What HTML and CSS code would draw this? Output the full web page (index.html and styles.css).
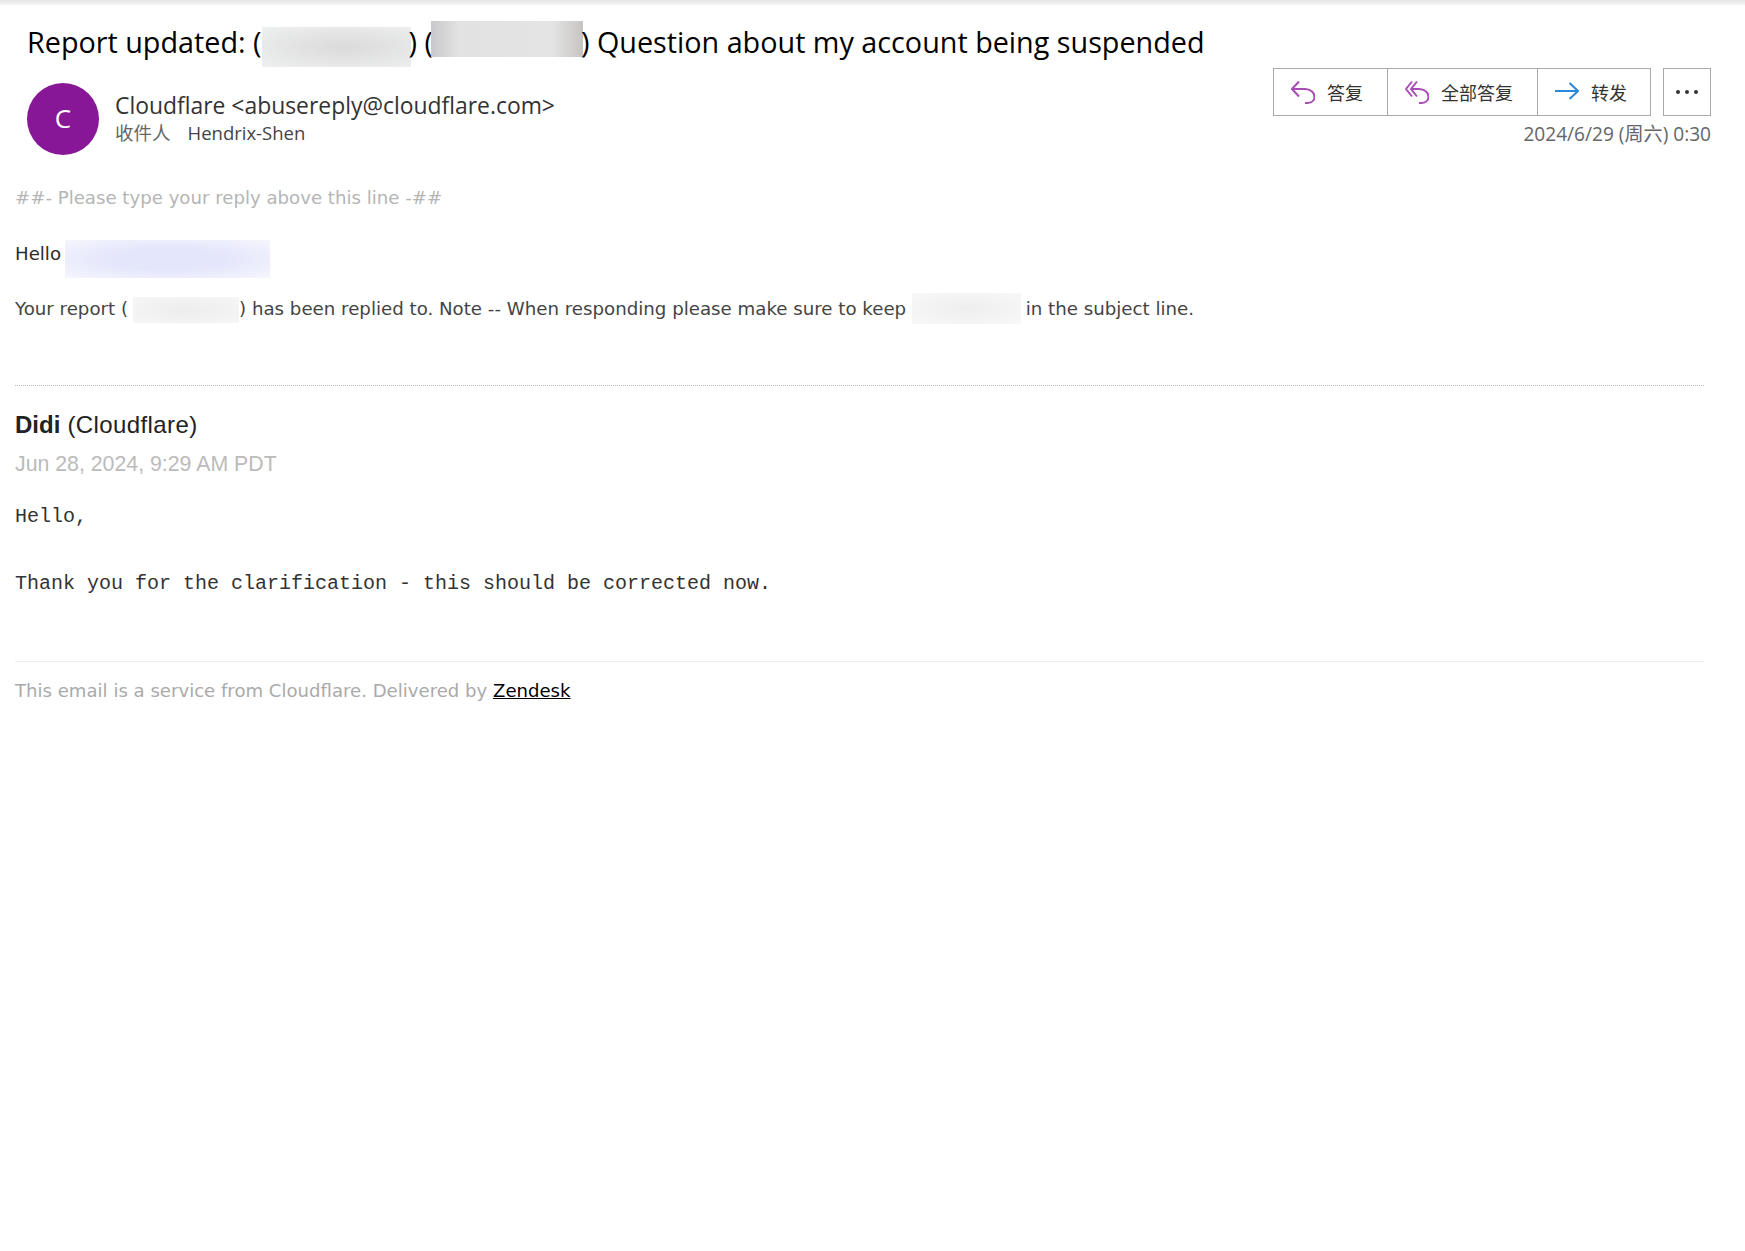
FILE: index.html
```html
<!DOCTYPE html>
<html lang="en">
<head>
<meta charset="utf-8">
<title>Report updated</title>
<link rel="stylesheet" href="styles.css">
</head>
<body>
<div class="topbar"></div>
<header class="head">
  <h1 class="subject">Report updated: (<span class="blur blur-s1"></span>) (<span class="blur blur-s2"></span>) Question about my account being suspended</h1>
  <div class="meta">
    <div class="avatar">C</div>
    <div class="who">
      <div class="from">Cloudflare &lt;abusereply@cloudflare.com&gt;</div>
      <div class="to"><span class="to-label">收件人</span><span>Hendrix-Shen</span></div>
    </div>
    <div class="actions">
      <div class="btn-row">
        <div class="btn-group">
          <button class="btn btn-reply"><svg class="ico" viewBox="0 0 24 24"><path d="M8 1.500 1 9l7 7.500M1 9h13c5.500 0 9.500 3.500 9.500 8 0 3.500-3 6-7.500 6h-2" /></svg><span>答复</span></button>
          <button class="btn btn-all"><svg class="ico" viewBox="0 0 24 24"><path d="M7 1.500 1 9l6 7.500M12 1.500 6 9l6 7.500M6 9h8c5.500 0 9.500 3.500 9.500 8 0 3.500-3 6-7.500 6h-2" /></svg><span>全部答复</span></button>
          <button class="btn btn-fwd"><svg class="ico ico-fwd" viewBox="0 0 24 24"><path d="M0 11h23M14.500 3 23 11l-8.500 8" /></svg><span>转发</span></button>
        </div>
        <button class="btn-more"><i></i><i></i><i></i></button>
      </div>
      <div class="date">2024/6/29 (周六) 0:30</div>
    </div>
  </div>
</header>
<main class="body">
  <p class="delim">##- Please type your reply above this line -##</p>
  <p class="hello">Hello <span class="blur blur-name"></span></p>
  <p class="report">Your report (<span class="blur blur-id"></span>) has been replied to. Note -- When responding please make sure to keep <span class="blur blur-key"></span> in the subject line.</p>
  <hr class="dotted">
  <p class="author"><strong>Didi</strong> (Cloudflare)</p>
  <p class="stamp">Jun 28, 2024, 9:29 AM PDT</p>
  <p class="mono mono-first">Hello,</p>
  <p class="mono">Thank you for the clarification - this should be corrected now.</p>
  <hr class="solid">
  <p class="foot">This email is a service from Cloudflare. Delivered by <a href="#">Zendesk</a></p>
</main>
</body>
</html>
```
FILE: styles.css
```css
* { box-sizing: border-box; }
html, body { margin: 0; background: #fff; }
body { width: 1745px; height: 1251px; overflow: hidden; font-family: "DejaVu Sans", sans-serif; }
.topbar { height: 5px; background: linear-gradient(#e6e6e6, #f6f6f6); }
.head { padding: 0 34px 0 27px; }
.subject { margin: 0; height: 72px; padding-top: 13px; font: 400 28.75px/48px "Open Sans", "Noto Sans", sans-serif; color: #000; white-space: nowrap; }
.blur { display: inline-block; }
.blur-s1 { width: 149px; height: 40px; margin-left: 0; margin-right: -2px; vertical-align: -14px; background: radial-gradient(ellipse at 55% 50%, #dadada, #eff0f1); }
.blur-s2 { width: 152px; height: 36px; margin-left: -1.500px; margin-right: -2.500px; vertical-align: -4px; background: linear-gradient(90deg, #c8c8ca, #e2e2e2 18%, #e4e4e4 80%, #c6c4c2); }
.meta { display: flex; align-items: flex-start; margin-top: 6px; }
.avatar { width: 72px; height: 72px; border-radius: 50%; background: #881798; color: #fff; font: 400 26px/70px "Open Sans", sans-serif; text-align: center; flex: none; }
.who { margin-left: 16px; padding-top: 8px; }
.from { font: 400 22.9px/30px "Open Sans", sans-serif; color: #333; white-space: nowrap; }
.to { font: 400 18.5px/24px "Open Sans", "Noto Sans CJK SC", sans-serif; color: #444; display: flex; gap: 17px; white-space: nowrap; }
.to-label { color: #666; }
.actions { margin-left: auto; margin-top: -15px; display: flex; flex-direction: column; align-items: flex-end; }
.btn-row { display: flex; gap: 12px; }
.btn-group { display: flex; border: 1px solid #aaa; height: 48px; }
.btn { display: flex; align-items: center; gap: 12px; height: 46px; padding: 0 0 0 17px; background: #fff; border: 0; border-left: 1px solid #aaa; font: 400 18px "Noto Sans CJK SC", sans-serif; color: #333; white-space: nowrap; }
.btn:first-child { border-left: 0; }
.btn-reply { width: 113px; }
.btn-all { width: 150px; }
.btn-fwd { width: 113px; }
.ico { width: 24px; height: 24px; fill: none; stroke: #a94cb5; stroke-width: 2; flex: none; }
.ico-fwd { stroke: #2b88d8; }
.btn-more { width: 48px; height: 48px; border: 1px solid #aaa; background: #fff; display: flex; align-items: center; justify-content: center; gap: 5px; padding: 0; }
.btn-more i { width: 4px; height: 4px; border-radius: 50%; background: #333; }
.date { margin-top: 5px; font: 400 19.1px/26px "Open Sans", "Noto Sans CJK SC", sans-serif; color: #666; white-space: nowrap; }
.body { padding: 0 41px 0 15px; }
.body p { margin: 0; white-space: nowrap; }
.delim { margin-top: 31px !important; font-size: 18.15px; line-height: 24px; color: #b5b5b5; }
.hello { margin-top: 30px !important; height: 38px; font-size: 18.15px; line-height: 27px; color: #2b2b2b; }
.report { margin-top: 15px !important; height: 31px; font-size: 18.2px; line-height: 31px; color: #444; }
.blur-name { width: 205px; height: 38px; margin-left: -2px; vertical-align: top; background: radial-gradient(ellipse at 50% 50%, #e4e6fb 40%, #f6f6fe); }
.blur-id { width: 106px; height: 26px; margin-left: 5px; vertical-align: middle; background: radial-gradient(ellipse, #ededed, #f6f6f6); }
.blur-key { width: 109px; height: 31px; margin-right: -1px; vertical-align: top; background: radial-gradient(ellipse, #eeeeee, #f8f8f8); }
.dotted { margin: 61px 0 0; border: 0; border-top: 1px dotted #bbb; }
.author { margin-top: 25px !important; font: 400 24px/28px "Liberation Sans", sans-serif; letter-spacing: 0.4px; color: #222; }
.author strong { font-weight: 700; letter-spacing: 0; }
.stamp { margin-top: 11px !important; font: 400 21.3px/28px "Liberation Sans", sans-serif; color: #bbb; }
.mono { font: 400 20px/28px "Liberation Mono", monospace; color: #333; margin-top: 39px !important; }
.mono-first { margin-top: 25px !important; }
.solid { margin: 63px 0 0; border: 0; border-top: 1px solid #eee; }
.foot { margin-top: 17px !important; font-size: 18.1px; line-height: 24px; color: #aaa; }
.foot a { color: #000; }
```
